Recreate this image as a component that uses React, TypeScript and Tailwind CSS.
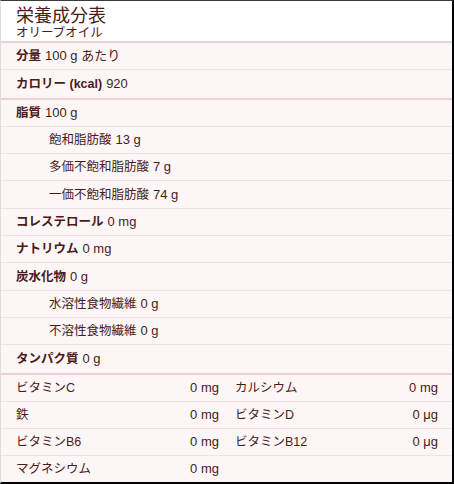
import React from "react";

const font = { fontFamily: '"Liberation Sans", "Noto Sans CJK JP", sans-serif' };

function Row({ label, value, sub, last }: { label: string; value: string; sub?: boolean; last?: boolean }) {
  return (
    <div
      className={`flex items-center h-[27.3px] ${last ? "" : "border-b border-[#f0e2e1]"} ${sub ? "pl-[48px]" : "pl-[15px]"} text-[12.5px]`}
    >
      <span className="leading-[16px]">
        <span className={sub ? "" : "font-bold"}>{label}</span>
        <span className="ml-[4px] text-[13px]">{value}</span>
      </span>
    </div>
  );
}

function GridRow({ a, av, b, bv, last }: { a: string; av: string; b?: string; bv?: string; last?: boolean }) {
  return (
    <div className={`flex h-[27px] items-center text-[12.5px] ${last ? "" : "border-b border-[#f0e2e1]"}`}>
      <div className="w-[220px] pl-[15px] pr-[2px] flex justify-between items-baseline leading-[16px]">
        <span>{a}</span>
        <span className="text-[13px]">{av}</span>
      </div>
      <div className="flex-1 pl-[14px] pr-[14px] flex justify-between items-baseline leading-[16px]">
        <span>{b ?? ""}</span>
        <span className="text-[13px]">{bv ?? ""}</span>
      </div>
    </div>
  );
}

export default function App() {
  return (
    <div
      style={font}
      className="w-[454px] h-[484px] overflow-hidden bg-[#fcf7f6] text-[#4a1a1c] border-l border-l-[#dcdcdc] border-t border-t-[#3a3a3a] border-r-2 border-r-black border-b-2 border-b-black"
    >
      <div className="bg-white h-[42px] pl-[15px] pt-[5px] border-b-2 border-[#ecd1d0]">
        <div className="text-[18px] leading-[20px]">栄養成分表</div>
        <div className="text-[12.5px] leading-[15px]">オリーブオイル</div>
      </div>
      <div className="border-b-2 border-[#ecd1d0]">
        <Row label="分量" value="100 g あたり" />
        <Row label="カロリー (kcal)" value="920" last />
      </div>
      <div className="border-b-2 border-[#ecd1d0]">
        <Row label="脂質" value="100 g" />
        <Row label="飽和脂肪酸" value="13 g" sub />
        <Row label="多価不飽和脂肪酸" value="7 g" sub />
        <Row label="一価不飽和脂肪酸" value="74 g" sub />
        <Row label="コレステロール" value="0 mg" />
        <Row label="ナトリウム" value="0 mg" />
        <Row label="炭水化物" value="0 g" />
        <Row label="水溶性食物繊維" value="0 g" sub />
        <Row label="不溶性食物繊維" value="0 g" sub />
        <Row label="タンパク質" value="0 g" last />
      </div>
      <div>
        <GridRow a="ビタミンC" av="0 mg" b="カルシウム" bv="0 mg" />
        <GridRow a="鉄" av="0 mg" b="ビタミンD" bv="0 μg" />
        <GridRow a="ビタミンB6" av="0 mg" b="ビタミンB12" bv="0 μg" />
        <GridRow a="マグネシウム" av="0 mg" last />
      </div>
    </div>
  );
}
